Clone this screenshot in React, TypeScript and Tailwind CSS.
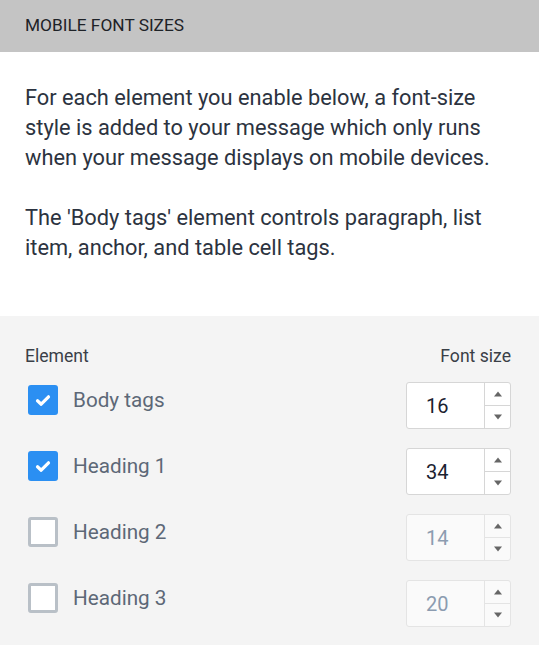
import React from "react";

type Row = { label: string; value: number; checked: boolean };

const rows: Row[] = [
  { label: "Body tags", value: 16, checked: true },
  { label: "Heading 1", value: 34, checked: true },
  { label: "Heading 2", value: 14, checked: false },
  { label: "Heading 3", value: 20, checked: false },
];

function Checkbox({ checked }: { checked: boolean }) {
  if (checked) {
    return (
      <div className="w-[30px] h-[30px] rounded-[3px] bg-[#2b8ff2] flex items-center justify-center shrink-0">
        <svg width="16" height="13" viewBox="0 0 16 13">
          <path d="M2.5 6.8 L6.2 10.2 L13.5 2.8" fill="none" stroke="#fff" strokeWidth="3.2" strokeLinecap="round" strokeLinejoin="round" />
        </svg>
      </div>
    );
  }
  return <div className="w-[30px] h-[30px] rounded-[3px] bg-white border-[3px] border-[#b9c0c7] shrink-0" />;
}

function NumberInput({ value, disabled }: { value: number; disabled: boolean }) {
  return (
    <div
      className={
        "w-[105px] h-[47px] rounded-[3px] border flex " +
        (disabled ? "bg-[#fafafa] border-[#e4e4e4]" : "bg-white border-[#d6d6d6]")
      }
    >
      <div
        className={
          "flex-1 flex items-center pl-[19px] text-[20px] " +
          (disabled ? "text-[#8c9cb0]" : "text-[#1b2230]")
        }
      >
        {value}
      </div>
      <div className={"w-[26px] border-l flex flex-col " + (disabled ? "border-[#e4e4e4]" : "border-[#d6d6d6]")}>
        <div className={"flex-1 flex items-center justify-center border-b " + (disabled ? "border-[#e4e4e4]" : "border-[#d6d6d6]")}>
          <svg width="10" height="6" viewBox="0 0 10 6">
            <path d="M1 5.5 L5 0.5 L9 5.5 Z" fill="#666" />
          </svg>
        </div>
        <div className="flex-1 flex items-center justify-center">
          <svg width="10" height="6" viewBox="0 0 10 6">
            <path d="M1 0.5 L5 5.5 L9 0.5 Z" fill="#666" />
          </svg>
        </div>
      </div>
    </div>
  );
}

export default function App() {
  return (
    <div className="w-[539px] h-[645px] flex flex-col" style={{ fontFamily: "Roboto, 'Noto Sans', sans-serif" }}>
      <div className="h-[52px] bg-[#c4c4c4] flex items-center px-[25px] text-[17.3px] text-[#1e2227]">
        MOBILE FONT SIZES
      </div>
      <div className="bg-white px-[25px] pt-[31px] pb-[53px] text-[21.8px] leading-[30px] text-[#2c3340]">
        <p>
          For each element you enable below, a font-size style is added to your message which only runs when your
          message displays on mobile devices.
        </p>
        <p className="mt-[30px]">
          The 'Body tags' element controls paragraph, list item, anchor, and table cell tags.
        </p>
      </div>
      <div className="flex-1 bg-[#f4f4f4] pl-[25px] pr-[28px] pt-[28px]">
        <div className="flex justify-between text-[17.6px] leading-[24px] text-[#3a3f47]">
          <span>Element</span>
          <span>Font size</span>
        </div>
        <div className="mt-[14px] flex flex-col gap-[19px]">
          {rows.map((r) => (
            <div key={r.label} className="flex justify-between items-start">
              <div className="flex items-center gap-[15px] ml-[3px] mt-[3px]">
                <Checkbox checked={r.checked} />
                <span className="text-[20.7px] leading-[30px] text-[#5d6877]">{r.label}</span>
              </div>
              <NumberInput value={r.value} disabled={!r.checked} />
            </div>
          ))}
        </div>
      </div>
    </div>
  );
}
